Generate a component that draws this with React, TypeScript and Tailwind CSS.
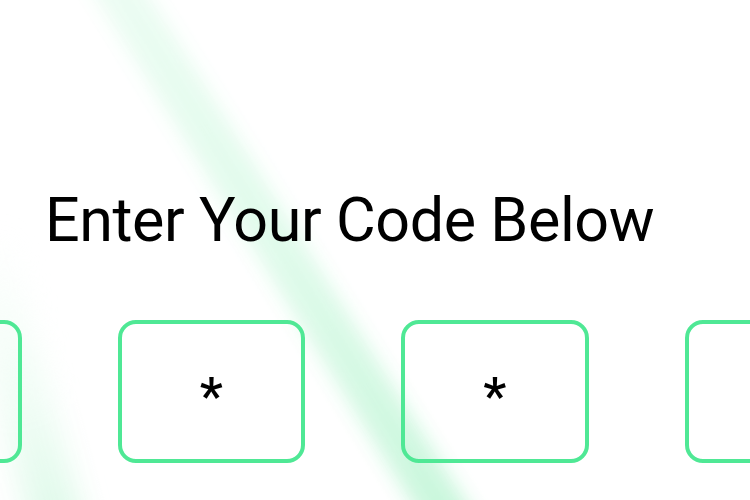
import React from "react";

export default function App() {
  const boxes = ["", "*", "*", ""];
  return (
    <div className="relative w-[750px] h-[500px] overflow-hidden bg-white" style={{ fontFamily: "Roboto, 'Noto Sans', sans-serif" }}>
      {/* decorative blurred bands */}
      <div className="pointer-events-none absolute left-[258px] top-[-110px] w-[46px] h-[720px] rotate-[-32deg] blur-[10px] bg-gradient-to-b from-[#eefdf4] via-[#e0fbeb] to-[#c6f6da]" />
      <div className="pointer-events-none absolute left-[0px] top-[230px] w-[54px] h-[360px] rotate-[-15deg] blur-[14px] bg-gradient-to-b from-[#ffffff00] via-[#f0fdf5] to-[#d6f8e4]" />

      <div className="relative flex flex-col">
        <h1 className="pl-[45px] pt-[184px] text-[61px] leading-[72px] font-normal text-black tracking-[-0.4px]">
          Enter Your Code Below
        </h1>
        <div className="mt-[64px] ml-[-166px] flex gap-[96px]">
          {boxes.map((c, i) => (
            <div
              key={i}
              className="shrink-0 w-[187.5px] h-[143px] rounded-[18px] border-4 border-[#4fe895] flex items-center justify-center"
            >
              <span className="text-[52px] leading-none font-medium text-black pt-[10px]">{c}</span>
            </div>
          ))}
        </div>
      </div>
    </div>
  );
}
